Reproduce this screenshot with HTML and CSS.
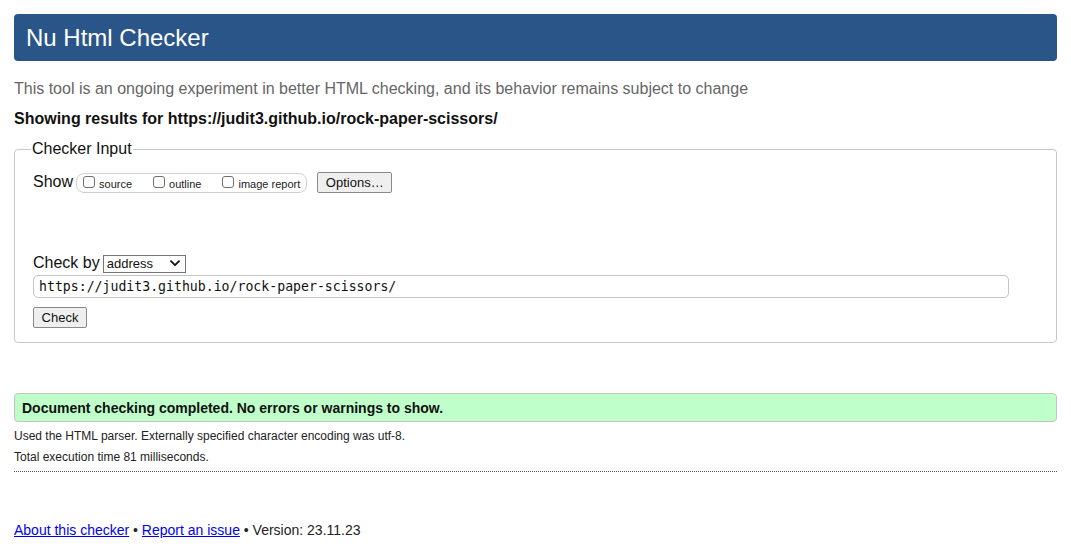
FILE: index.html
```html
<!DOCTYPE html>
<html lang="en">
<head>
<meta charset="utf-8">
<title>Nu Html Checker</title>
<link rel="stylesheet" href="styles.css">
</head>
<body>
<h1 class="banner">Nu Html Checker</h1>
<p class="intro">This tool is an ongoing experiment in better HTML checking, and its behavior remains subject to change</p>
<p class="showing">Showing results for https://judit3.github.io/rock-paper-scissors/</p>
<fieldset class="input-box">
  <legend class="legend">Checker Input</legend>
  <div class="show-row">
    <span class="show-label">Show</span>
    <span class="opts">
      <label class="opt opt-source"><input type="checkbox" class="cb"><span>source</span></label>
      <label class="opt opt-outline"><input type="checkbox" class="cb"><span>outline</span></label>
      <label class="opt opt-image"><input type="checkbox" class="cb"><span>image report</span></label>
    </span>
    <button class="btn btn-options" type="button">Options…</button>
  </div>
  <div class="checkby-row">
    <span class="checkby-label">Check by</span>
    <span class="select-wrap">
      <select class="select"><option>address</option></select>
      <svg class="chev" width="10" height="7" viewBox="0 0 10 7"><path d="M1 1.2 L5 5.2 L9 1.2" fill="none" stroke="#111" stroke-width="1.8" stroke-linecap="round" stroke-linejoin="round"/></svg>
    </span>
  </div>
  <div class="url-row"><input class="url" type="text" value="https://judit3.github.io/rock-paper-scissors/"></div>
  <div class="check-row"><button class="btn btn-check" type="button">Check</button></div>
</fieldset>
<div class="success">Document checking completed. No errors or warnings to show.</div>
<p class="meta">Used the HTML parser. Externally specified character encoding was utf-8.</p>
<p class="meta meta-time">Total execution time 81 milliseconds.</p>
<hr class="sep">
<p class="footer"><a href="#">About this checker</a> • <a href="#">Report an issue</a> • Version: 23.11.23</p>
</body>
</html>
```
FILE: styles.css
```css
html, body {
  margin: 0;
  padding: 0;
  background: #ffffff;
}
body {
  padding: 14px 14px 0 14px;
  font-family: "Liberation Sans", Arial, Helvetica, sans-serif;
  color: #111;
}
.banner {
  margin: 0;
  height: 47px;
  line-height: 47px;
  padding: 0 0 0 12px;
  background: #2a5589;
  color: #ffffff;
  font-size: 24px;
  font-weight: normal;
  border-radius: 4px;
}
.intro {
  margin: 18px 0 0 0;
  font-size: 16px;
  line-height: 20px;
  color: #666;
}
.showing {
  margin: 10px 0 0 0;
  font-size: 16px;
  line-height: 20px;
  font-weight: bold;
  color: #111;
}
.input-box {
  margin: 10px 0 0 0;
  padding: 12px 18px 14px 18px;
  border: 1px solid #c8c8c8;
  border-radius: 4px;
  min-width: 0;
}
.legend {
  font-size: 16px;
  line-height: 20px;
  padding: 0 1px;
  margin-left: -2px;
  color: #111;
}
.show-row {
  display: flex;
  align-items: center;
  height: 22px;
}
.show-label {
  font-size: 16px;
  margin-right: 3px;
}
.opts {
  display: flex;
  align-items: center;
  height: 18px;
  border: 1px solid #cfcfcf;
  border-radius: 8px;
  padding: 0 6px 0 6px;
  font-size: 11px;
  margin-top: 1px;
}
.opt {
  display: flex;
  align-items: center;
  color: #222;
}
.opt-source { margin-right: 21px; }
.opt-outline { margin-right: 21px; }
.cb {
  appearance: none;
  -webkit-appearance: none;
  width: 12px;
  height: 12px;
  margin: 0 4px 0 0;
  border: 1px solid #6f6f6f;
  border-radius: 3px;
  background: #fff;
  position: relative;
  top: -1px;
}
.opt span { position: relative; top: 1px; }
.btn {
  font-family: "Liberation Sans", Arial, sans-serif;
  font-size: 13px;
  color: #111;
  background: #efefef;
  border: 1px solid #8a8a8a;
  border-radius: 2px;
  height: 21px;
  padding: 0 6px;
  line-height: 19px;
}
.btn-options {
  margin-left: 10px;
  width: 75px;
  padding: 0;
}
.checkby-row {
  display: flex;
  align-items: center;
  margin-top: 60px;
  height: 20px;
}
.checkby-label {
  font-size: 16px;
  margin-right: 3px;
}
.select-wrap {
  position: relative;
  display: inline-block;
  height: 18px;
}
.select {
  appearance: none;
  -webkit-appearance: none;
  width: 83px;
  height: 18px;
  margin: 0;
  padding: 0 0 0 3px;
  font-family: "Liberation Sans", Arial, sans-serif;
  font-size: 13px;
  line-height: 16px;
  color: #111;
  background: #fff;
  border: 1px solid #767676;
  border-radius: 0;
}
.chev {
  position: absolute;
  right: 6px;
  top: 6px;
  pointer-events: none;
}
.url-row {
  margin-top: 2px;
}
.url {
  box-sizing: border-box;
  width: 976px;
  height: 23px;
  margin: 0;
  padding: 0 0 0 5px;
  border: 1px solid #c4c4c4;
  border-radius: 5px;
  font-family: "DejaVu Sans Mono", "Liberation Mono", monospace;
  font-size: 13.2px;
  color: #111;
  background: #fff;
}
.check-row {
  margin-top: 9px;
}
.btn-check {
  width: 54px;
  padding: 0;
}
.success {
  margin-top: 50px;
  height: 27px;
  line-height: 28px;
  padding: 0 0 0 7px;
  background: #bfffc9;
  border: 1px solid #c4c4c4;
  border-radius: 4px;
  font-size: 14px;
  font-weight: bold;
  color: #111;
}
.meta {
  margin: 7px 0 0 0;
  font-size: 12px;
  line-height: 15px;
  color: #222;
}
.meta-time {
  margin-top: 6px;
}
.sep {
  margin: 6px 0 0 0;
  border: 0;
  border-top: 1px dotted #555;
  height: 0;
}
.footer {
  margin: 50px 0 0 0;
  font-size: 14px;
  line-height: 16px;
  color: #222;
}
.footer a {
  color: #0000ee;
  text-decoration: underline;
}
```
